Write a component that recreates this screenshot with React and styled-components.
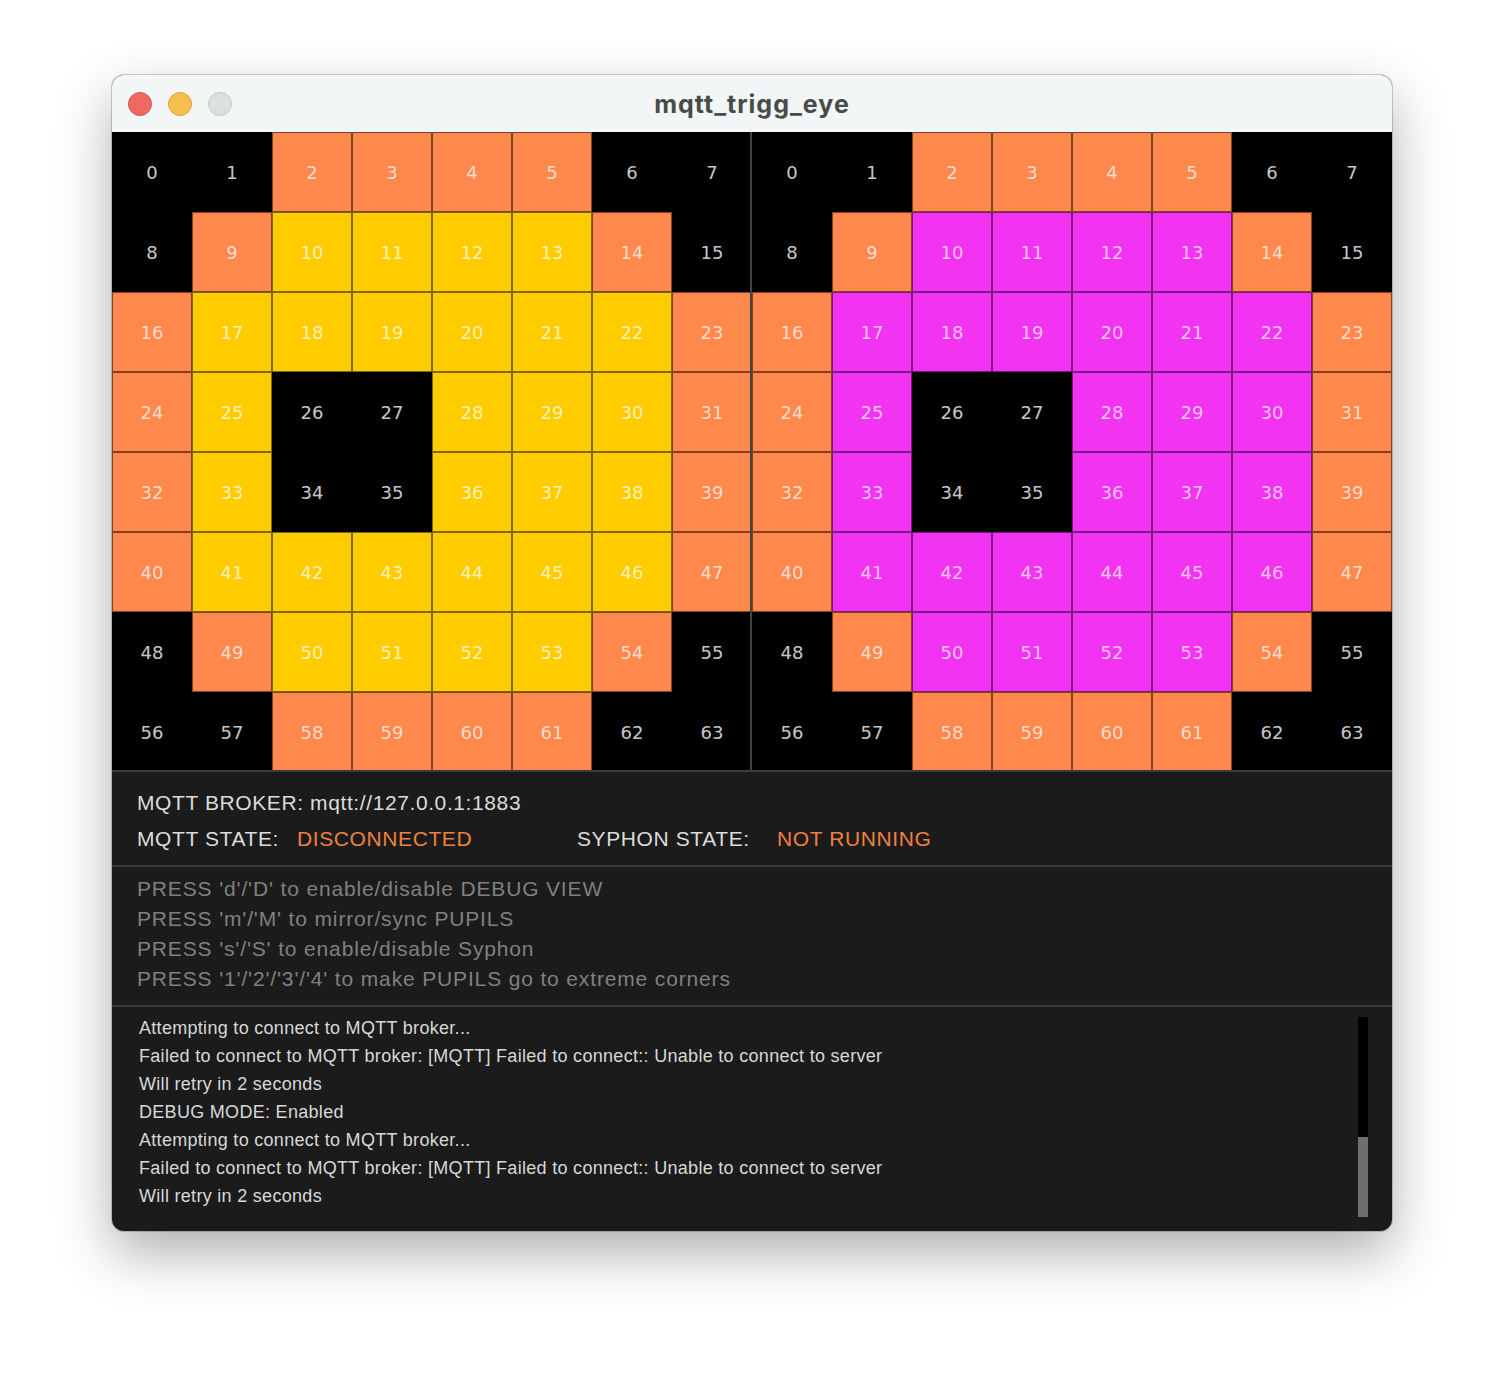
import React from 'react'
import styled, { createGlobalStyle } from 'styled-components'

const GlobalStyle = createGlobalStyle`
  html, body {
    margin: 0;
    background: #ffffff;
  }
`

const colors = {
  B: '#000000',
  O: '#ff884d',
  Y: '#ffcc00',
  M: '#f233f2',
}

// 8x8 eye pattern, P = pupil colour
const pattern = [
  'BBOOOOBB',
  'BOPPPPOB',
  'OPPPPPPO',
  'OPBBPPPO',
  'OPBBPPPO',
  'OPPPPPPO',
  'BOPPPPOB',
  'BBOOOOBB',
]

const logLines = [
  'Attempting to connect to MQTT broker...',
  'Failed to connect to MQTT broker: [MQTT] Failed to connect:: Unable to connect to server',
  'Will retry in 2 seconds',
  'DEBUG MODE: Enabled',
  'Attempting to connect to MQTT broker...',
  'Failed to connect to MQTT broker: [MQTT] Failed to connect:: Unable to connect to server',
  'Will retry in 2 seconds',
]

const help = [
  "PRESS 'd'/'D' to enable/disable DEBUG VIEW",
  "PRESS 'm'/'M' to mirror/sync PUPILS",
  "PRESS 's'/'S' to enable/disable Syphon",
  "PRESS '1'/'2'/'3'/'4' to make PUPILS go to extreme corners",
]

const Page = styled.div`
  padding: 75px 112px 150px;
`

const Window = styled.div`
  width: 1280px;
  border-radius: 12px;
  overflow: hidden;
  background: #1b1b1b;
  box-shadow: 0 22px 55px rgba(0, 0, 0, 0.32), 0 0 0 1px rgba(0, 0, 0, 0.18);
`

const TitleBar = styled.div`
  height: 57px;
  background: #f2f6f7;
  display: grid;
  grid-template-columns: 1fr auto 1fr;
  align-items: center;
`

const Lights = styled.div`
  display: flex;
  gap: 16px;
  padding-left: 16px;
`

const Light = styled.span`
  width: 22px;
  height: 22px;
  border-radius: 50%;
  background: ${p => p.$bg};
  border: 1px solid ${p => p.$edge};
`

const Title = styled.div`
  font-family: Inter, "Liberation Sans", sans-serif;
  font-weight: 700;
  font-size: 25px;
  color: #4a4a4a;
  letter-spacing: 1px;
`

const GridArea = styled.div`
  display: flex;
  height: 638px;
  overflow: hidden;
  background: #000;
`

const Eye = styled.div`
  display: grid;
  grid-template-columns: repeat(8, 80px);
  grid-auto-rows: 80px;
`

const Cell = styled.div`
  display: flex;
  align-items: center;
  justify-content: center;
  padding-top: 1px;
  background: ${p => p.$fill};
  box-shadow: ${p => (p.$edge ? 'inset -2px 0 0 #444444, ' : '')}inset 0 0 0 1px rgba(0, 0, 0, 0.5);
  font-family: "DejaVu Sans", sans-serif;
  font-size: 18px;
  color: ${p => (p.$dark ? 'rgba(255,255,255,0.8)' : 'rgba(255,255,255,0.72)')};
`

const Section = styled.div`
  border-top: 2px solid #3a3a3a;
  padding: ${p => p.$pad};
  font-family: "Liberation Sans", Arial, sans-serif;
`

const Line = styled.div`
  font-size: 21px;
  letter-spacing: ${p => p.$ls || '0.6px'};
  line-height: ${p => p.$lh || '36px'};
  color: ${p => p.$color || '#dcdcdc'};
  white-space: nowrap;
  display: flex;
`

const Label = styled.span`
  width: ${p => p.$w};
  flex: none;
  color: ${p => p.$color || '#dcdcdc'};
`

const LogPanel = styled.div`
  border-top: 2px solid #3a3a3a;
  height: 226px;
  display: flex;
  justify-content: space-between;
  padding: 7px 24px 0 27px;
  box-sizing: border-box;
`

const LogText = styled.div`
  font-family: "Liberation Sans", Arial, sans-serif;
  font-size: 18px;
  letter-spacing: 0.3px;
  line-height: 28px;
  color: #d8d8d8;
  white-space: nowrap;
`

const ScrollTrack = styled.div`
  margin-top: 3px;
  width: 10px;
  height: 200px;
  background: #000;
  display: flex;
  flex-direction: column;
  justify-content: flex-end;
`

const ScrollThumb = styled.div`
  height: 80px;
  background: #6e6e6e;
`

function EyeGrid({ pupil, divider }) {
  return (
    <Eye>
      {pattern.map((row, r) =>
        row.split('').map((k, c) => {
          const key = k === 'P' ? pupil : k
          return (
            <Cell
              key={r * 8 + c}
              $fill={colors[key]}
              $dark={key === 'B'}
              $edge={divider && c === 7}
            >
              {r * 8 + c}
            </Cell>
          )
        })
      )}
    </Eye>
  )
}

export default function App() {
  return (
    <>
      <GlobalStyle />
      <Page>
        <Window>
          <TitleBar>
            <Lights>
              <Light $bg="#ee6a5f" $edge="#d4574d" />
              <Light $bg="#f5be4f" $edge="#d9a33d" />
              <Light $bg="#dcdfe0" $edge="#c5c8c9" />
            </Lights>
            <Title>mqtt_trigg_eye</Title>
            <div />
          </TitleBar>
          <GridArea>
            <EyeGrid pupil="Y" divider />
            <EyeGrid pupil="M" />
          </GridArea>
          <Section $pad="13px 25px 8px">
            <Line>MQTT BROKER: mqtt://127.0.0.1:1883</Line>
            <Line>
              <Label $w="160px">MQTT STATE:</Label>
              <Label $w="280px" $color="#f08040">DISCONNECTED</Label>
              <Label $w="200px">SYPHON STATE:</Label>
              <Label $w="auto" $color="#f08040">NOT RUNNING</Label>
            </Line>
          </Section>
          <Section $pad="7px 25px 11px">
            {help.map((t, i) => (
              <Line key={i} $lh="30px" $ls="0.85px" $color="#808080">{t}</Line>
            ))}
          </Section>
          <LogPanel>
            <LogText>
              {logLines.map((t, i) => (
                <div key={i}>{t}</div>
              ))}
            </LogText>
            <ScrollTrack>
              <ScrollThumb />
            </ScrollTrack>
          </LogPanel>
        </Window>
      </Page>
    </>
  )
}
